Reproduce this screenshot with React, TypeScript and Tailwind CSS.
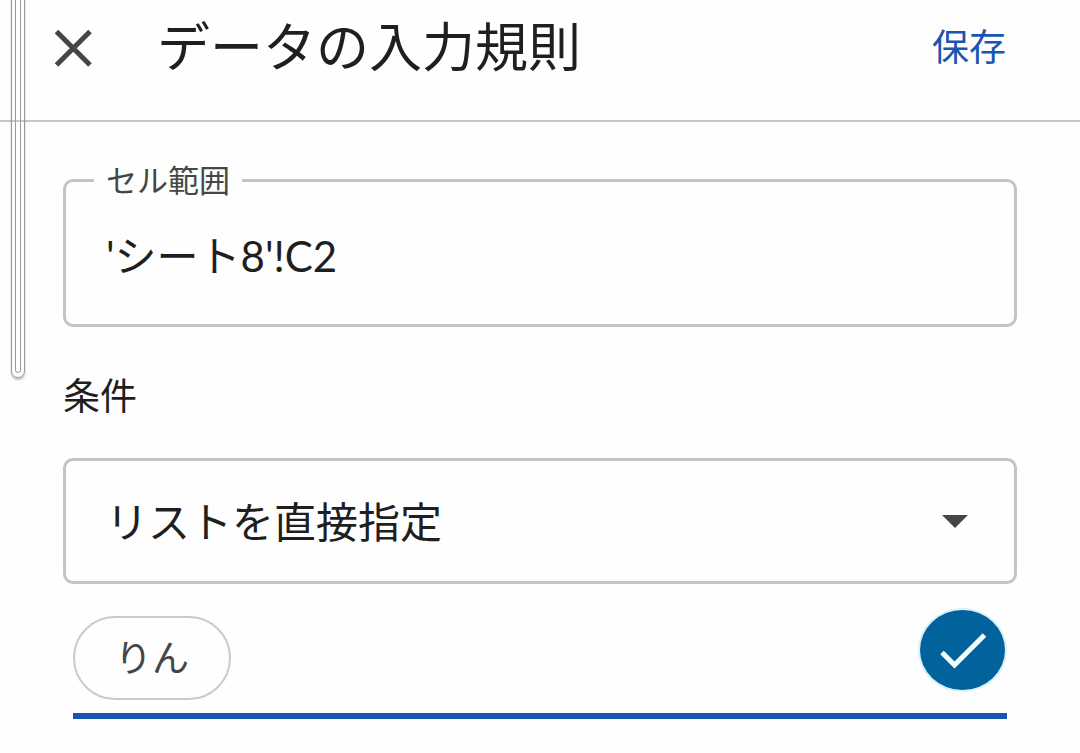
import { useState } from 'react';

const ScrollHandle = () => (
  <div
    aria-hidden="true"
    className="pointer-events-none absolute -top-4 left-[11px] h-[394px] w-3.5 rounded-full border border-[#9a9a9a] px-[3px] pb-1 shadow-[0_2px_2px_rgba(0,0,0,0.25)]"
  >
    <div className="h-full rounded-full border border-[#9a9a9a]" />
  </div>
);

const Header = () => (
  <header className="flex h-[122px] items-start border-b-2 border-[#c6c6c6] pt-[13px] pr-[74px] pl-[54px]">
    <button type="button" aria-label="閉じる" className="flex h-[72px] w-10 items-center">
      <svg className="h-10 w-10" viewBox="0 0 40 40" fill="none" stroke="#444746" strokeWidth={5}>
        <path d="M3 3L36.5 36.5M36.5 3L3 36.5" transform="translate(-0.5 -0.5)" />
      </svg>
    </button>
    <h1 className="ml-[63px] flex-1 text-[53px] leading-[72px] text-[#1f1f1f]">データの入力規則</h1>
    <button type="button" className="text-[37px] leading-[72px] text-[#1a56b0]">
      保存
    </button>
  </header>
);

const CellRange = () => {
  const [range, setRange] = useState("'シート8'!C2");

  return (
    <fieldset className="rounded-[10px] border-[3px] border-[#c4c4c4] px-7">
      <legend className="px-3 pt-1 text-[31px] leading-10 text-[#444746]">
        <label htmlFor="range">セル範囲</label>
      </legend>
      <input
        id="range"
        value={range}
        onChange={(e) => setRange(e.target.value)}
        className="mb-5 block h-[102px] w-full bg-transparent px-3 font-[Lato,'Noto_Sans_CJK_JP',sans-serif] text-[42px] text-[#1f1f1f] outline-none"
      />
    </fieldset>
  );
};

const Condition = () => (
  <section className="mt-11">
    <label htmlFor="condition" className="block text-[37px] leading-[54px] text-[#1f1f1f]">
      条件
    </label>
    <div className="relative mt-[33px]">
      <select
        id="condition"
        className="block h-[126px] w-full appearance-none rounded-[10px] border-[3px] border-[#c4c4c4] bg-transparent px-10 pt-1 text-[42px] text-[#1f1f1f] outline-none"
      >
        <option>リストを直接指定</option>
      </select>
      <svg
        className="pointer-events-none absolute top-[57px] right-[49px] h-[13px] w-[26px]"
        viewBox="0 0 26 13"
        fill="#444746"
      >
        <path d="M0 0H26L13 13Z" />
      </svg>
    </div>
  </section>
);

const ListItems = () => (
  <div className="mx-2.5 mt-6 flex items-start justify-between border-b-[6px] border-[#1a56b0] pr-0.5 pb-[13px]">
    <button
      type="button"
      className="mt-2 h-[84px] rounded-full border-2 border-[#cacaca] px-10 pt-1 text-[37px] text-[#444746]"
    >
      りん
    </button>
    <button
      type="button"
      aria-label="追加"
      className="mt-0.5 h-20 w-[85px] rounded-[50%] bg-[#02639c] shadow-[0_0_0_2px_#d8f1fc]"
    >
      <svg className="h-20 w-[85px]" viewBox="0 0 85 80" fill="none" stroke="#f0fdff" strokeWidth={5}>
        <path d="M22 42.5L34.5 55L64.5 25" />
      </svg>
    </button>
  </div>
);

export default function App() {
  return (
    <div className="relative min-h-screen overflow-hidden bg-[#fefefe] font-[Roboto,'Noto_Sans_CJK_JP',sans-serif]">
      <Header />
      <main className="px-[63px] pt-9 pb-8">
        <CellRange />
        <Condition />
        <ListItems />
      </main>
      <ScrollHandle />
    </div>
  );
}
